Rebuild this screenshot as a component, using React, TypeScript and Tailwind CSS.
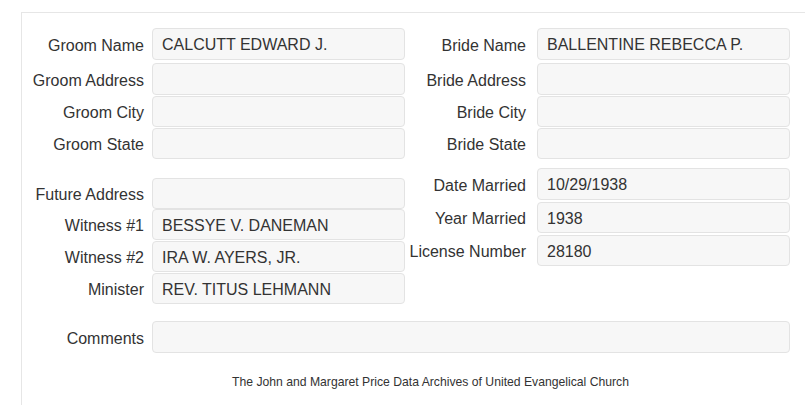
import React from "react";

type FieldProps = {
  label: string;
  value?: string;
  h: number;
  mt: number;
  labelW: number;
  gap: number;
  inputW: number;
};

function Field({ label, value, h, mt, labelW, gap, inputW }: FieldProps) {
  return (
    <div className="flex items-center" style={{ marginTop: mt }}>
      <div
        className="pt-[3px] text-right whitespace-nowrap text-[16px] text-[#333333]"
        style={{ width: labelW, marginRight: gap }}
      >
        {label}
      </div>
      <div
        className="flex items-center rounded-[4px] border border-[#e3e3e3] bg-[#f7f7f7] pl-[9px] pt-[2px] text-[16px] text-[#333333] whitespace-nowrap"
        style={{ width: inputW, height: h }}
      >
        {value}
      </div>
    </div>
  );
}

export default function App() {
  const L = { labelW: 122, gap: 8, inputW: 253 };
  const R = { labelW: 121, gap: 11, inputW: 253 };
  return (
    <div
      className="w-[805px] h-[405px] overflow-hidden bg-white pl-[21px] pt-[12px]"
      style={{ fontFamily: '"Liberation Sans", Arial, sans-serif' }}
    >
      <div className="h-[393px] w-[800px] border-t border-l border-[#e6e6e6]">
        <div className="flex">
          <div className="flex flex-col">
            <Field label="Groom Name" value="CALCUTT EDWARD J." h={32} mt={15} {...L} />
            <Field label="Groom Address" h={32} mt={3} {...L} />
            <Field label="Groom City" h={31} mt={1} {...L} />
            <Field label="Groom State" h={31} mt={1} {...L} />
          </div>
          <div className="flex flex-col">
            <Field label="Bride Name" value="BALLENTINE REBECCA P." h={32} mt={15} {...R} />
            <Field label="Bride Address" h={32} mt={3} {...R} />
            <Field label="Bride City" h={31} mt={1} {...R} />
            <Field label="Bride State" h={31} mt={1} {...R} />
          </div>
        </div>
        <div className="flex items-start">
          <div className="flex flex-col">
            <Field label="Future Address" h={31} mt={19} {...L} />
            <Field label="Witness #1" value="BESSYE V. DANEMAN" h={31} mt={0} {...L} />
            <Field label="Witness #2" value="IRA W. AYERS, JR." h={31} mt={1} {...L} />
            <Field label="Minister" value="REV. TITUS LEHMANN" h={31} mt={1} {...L} />
          </div>
          <div className="flex flex-col">
            <Field label="Date Married" value="10/29/1938" h={32} mt={9} {...R} />
            <Field label="Year Married" value="1938" h={31} mt={2} {...R} />
            <Field label="License Number" value="28180" h={31} mt={2} {...R} />
          </div>
        </div>
        <Field label="Comments" h={32} mt={17} labelW={122} gap={8} inputW={638} />
        <div className="mt-[21px] pl-[18px] text-center text-[12.2px] leading-[16px] text-[#333333]">
          The John and Margaret Price Data Archives of United Evangelical Church
        </div>
      </div>
    </div>
  );
}
